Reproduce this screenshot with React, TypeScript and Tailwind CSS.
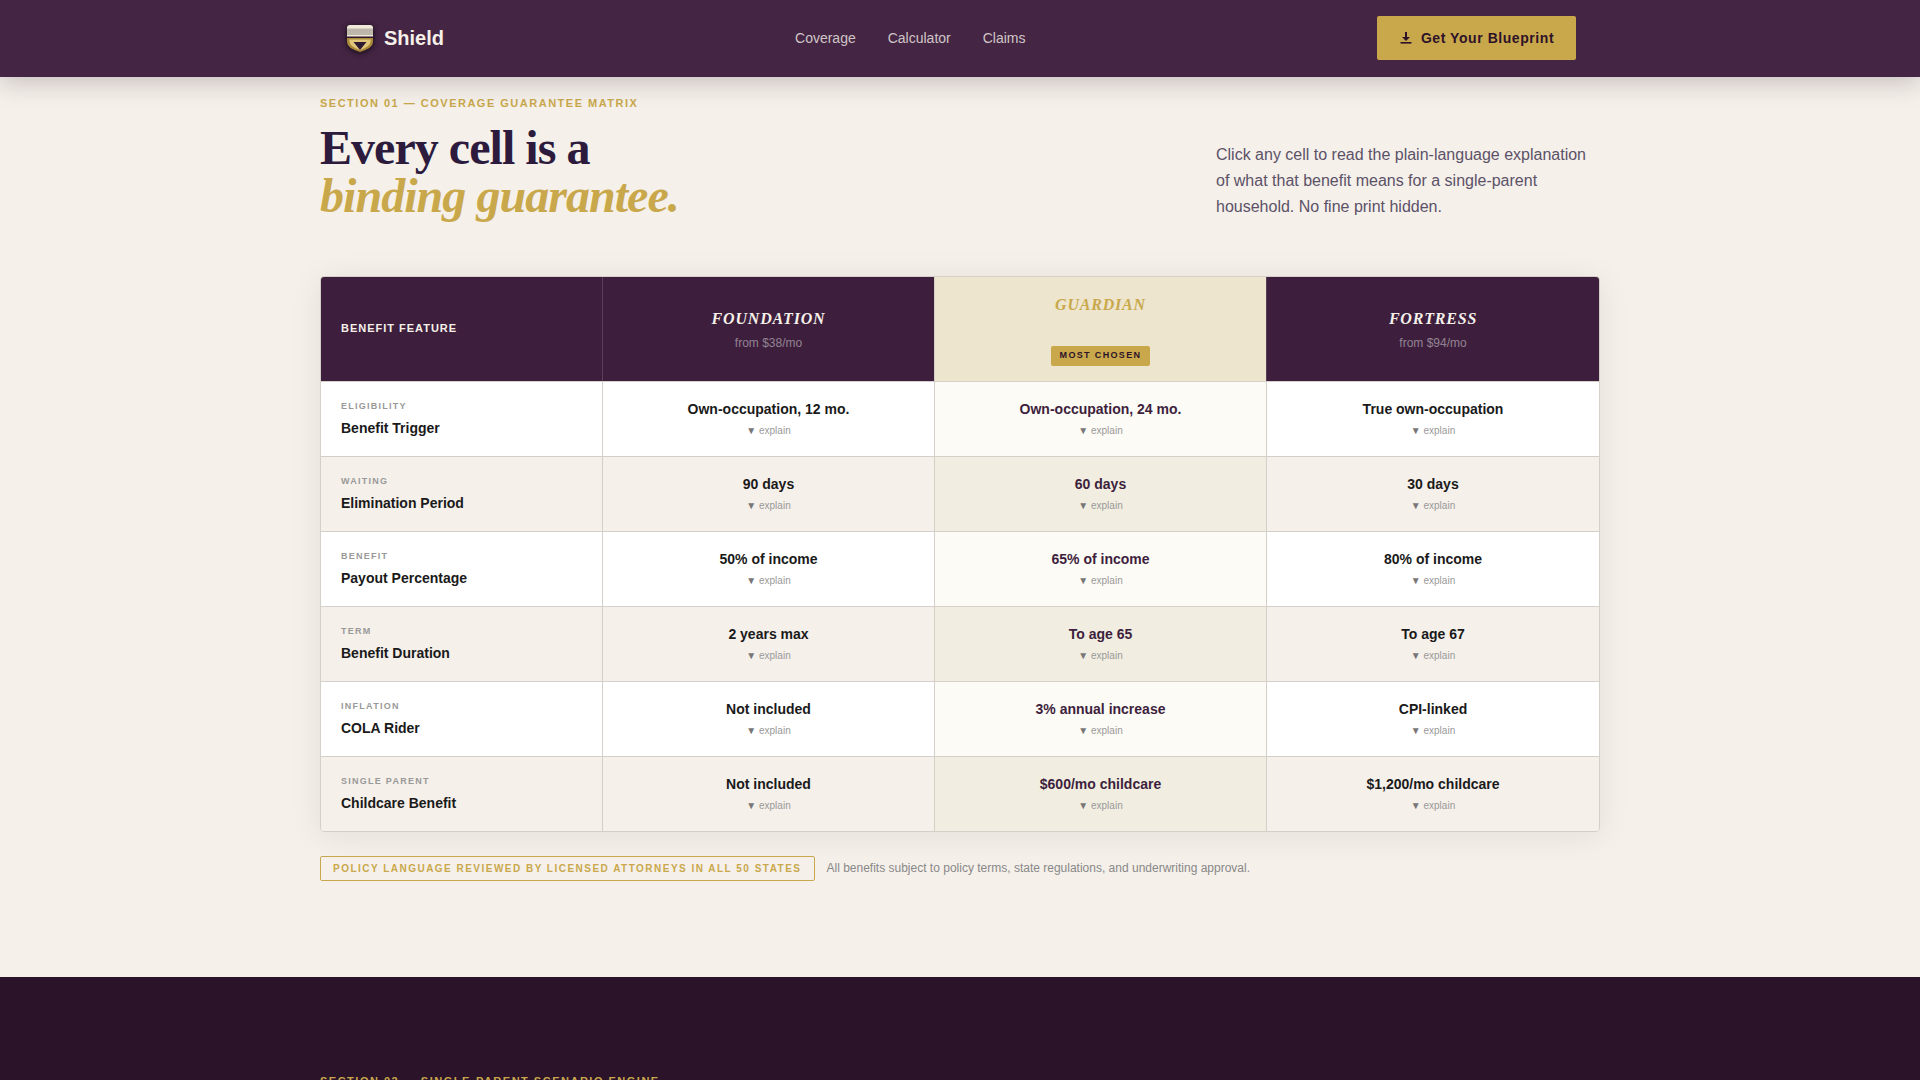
import React from 'react';

const sans = "font-['Liberation_Sans',Arial,sans-serif]";
const serif = "font-['Liberation_Serif','Times_New_Roman',serif]";
const cols = 'grid grid-cols-[281px_332px_332px_333px]';

const rows = [
  { tag: 'ELIGIBILITY', name: 'Benefit Trigger', vals: ['Own-occupation, 12 mo.', 'Own-occupation, 24 mo.', 'True own-occupation'] },
  { tag: 'WAITING', name: 'Elimination Period', vals: ['90 days', '60 days', '30 days'] },
  { tag: 'BENEFIT', name: 'Payout Percentage', vals: ['50% of income', '65% of income', '80% of income'] },
  { tag: 'TERM', name: 'Benefit Duration', vals: ['2 years max', 'To age 65', 'To age 67'] },
  { tag: 'INFLATION', name: 'COLA Rider', vals: ['Not included', '3% annual increase', 'CPI-linked'] },
  { tag: 'SINGLE PARENT', name: 'Childcare Benefit', vals: ['Not included', '$600/mo childcare', '$1,200/mo childcare'] },
];

function Logo() {
  return (
    <svg width="32" height="32" viewBox="0 0 32 32" className="drop-shadow-[0_1px_3px_rgba(0,0,0,0.75)]">
      <path d="M3 6 Q3 3 6 3 H26 Q29 3 29 6 V16 H3 Z" fill="#efe9da" />
      <rect x="3" y="6.5" width="26" height="6.5" fill="#bdb6aa" />
      <rect x="3" y="14.5" width="26" height="1.5" fill="#33192f" />
      <path d="M3 16 H29 V20 Q29 26 16 30 Q3 26 3 20 Z" fill="#a98a3a" />
      <path d="M5.5 17.5 H26.5 V20 Q26 24.5 16 28 Q6 24.5 5.5 20 Z" fill="#e2c77a" />
      <path d="M9.5 20 H22.5 L16 28 Z" fill="#2d1b33" />
    </svg>
  );
}

function PlanHead({ name, price }: { name: string; price: string }) {
  return (
    <div className="bg-[#3d1f3d] border-l border-white/15 flex flex-col items-center justify-center pt-[2px]">
      <div className={`${serif} italic font-bold text-base tracking-[0.05em] text-[#f5f0e8] uppercase leading-[20px]`}>{name}</div>
      <div className="text-xs text-white/45 mt-[5px] leading-[18px]">{price}</div>
    </div>
  );
}

function Cell({ value, guardian, alt }: { value: string; guardian: boolean; alt: boolean }) {
  const bg = guardian ? (alt ? 'bg-[#f1eee1]' : 'bg-[#fdfbf6]') : alt ? 'bg-[#f5f0ea]' : 'bg-white';
  return (
    <div className={`${bg} border-l border-[#d4cfc8] flex flex-col items-center pt-[18px]`}>
      <div className={`text-sm font-bold leading-[18px] ${guardian ? 'text-[#3d1f3d]' : 'text-[#1a1a1a]'}`}>{value}</div>
      <div className="text-[10px] leading-[14px] mt-[6px] text-[#999]"><span className="text-[#777]">▼</span> explain</div>
    </div>
  );
}

export default function App() {
  return (
    <div className={`${sans} h-[1080px] overflow-hidden bg-[#f5f0ea] flex flex-col`}>
      <nav className="relative z-10 h-[77px] bg-[#442544] shadow-[0_4px_24px_rgba(45,27,51,0.25)] shrink-0">
        <div className="w-[1280px] mx-auto h-full flex items-center px-6 pb-[2px]">
          <div className="flex items-center gap-2">
            <Logo />
            <span className="text-xl font-bold text-[#f5f0e8]">Shield</span>
          </div>
          <div className="ml-[351px] flex items-center gap-8 text-sm text-[#f5f0e8]/80">
            <span>Coverage</span>
            <span>Calculator</span>
            <span>Claims</span>
          </div>
          <button className="ml-auto h-11 w-[199px] bg-[#c9a84c] rounded-[2px] flex items-center justify-center gap-[8px] text-sm font-bold tracking-[0.04em] text-[#2d1228]">
            <svg width="14" height="14" viewBox="0 0 14 14" fill="currentColor">
              <path d="M6 1 H8 V6 H11 L7 10 L3 6 H6 Z" />
              <rect x="1.5" y="11" width="11" height="1.6" />
            </svg>
            Get Your Blueprint
          </button>
        </div>
      </nav>

      <main className="w-[1280px] mx-auto shrink-0 pt-[20px] h-[900px]">
        <div className="text-[11px] font-bold tracking-[1.5px] text-[#c9a84c] leading-[13px]">SECTION 01 — COVERAGE GUARANTEE MATRIX</div>
        <div className="flex justify-between mt-[10px] h-[118px]">
          <h1 className={`${serif} font-bold text-5xl leading-[48px] tracking-[-0.02em] text-[#2d1b3d] pt-[4px]`}>
            Every cell is a
            <br />
            <em className="text-[#c9a84c]">binding guarantee.</em>
          </h1>
          <p className="w-[384px] pt-[22px] text-base leading-[26px] text-[#5c5268]">
            Click any cell to read the plain-language explanation of what that benefit means for a single-parent household. No fine print hidden.
          </p>
        </div>

        <div className="mt-[38px] border border-[#d4cfc8] rounded-[4px] overflow-hidden shadow-[0_4px_32px_rgba(45,27,51,0.08)]">
          <div className={`${cols} h-[104px]`}>
            <div className="bg-[#3d1f3d] flex items-center pl-5 pb-[2px] text-[11px] font-bold tracking-[0.09em] text-[#f5f0e8]">BENEFIT FEATURE</div>
            <PlanHead name="Foundation" price="from $38/mo" />
            <div className="bg-[#ede5cd] border-l border-[#d4cfc8] flex flex-col items-center pt-[16px]">
              <div className={`${serif} italic font-bold text-base tracking-[0.05em] text-[#c9a84c] leading-[24px]`}>GUARDIAN</div>
              <span className="mt-[29px] h-5 px-[9px] rounded-[2px] bg-[#c9a84c] text-[9px] font-bold tracking-[0.15em] text-[#2d1228] flex items-center">MOST CHOSEN</span>
            </div>
            <PlanHead name="Fortress" price="from $94/mo" />
          </div>
          {rows.map((r, i) => (
            <div key={r.name} className={`${cols} h-[75px] border-t border-[#d4cfc8]`}>
              <div className={`${i % 2 ? 'bg-[#f5f0ea]' : 'bg-white'} pl-5 pt-[19px]`}>
                <div className="text-[9px] font-bold tracking-[0.14em] text-[#999] leading-[11px]">{r.tag}</div>
                <div className="text-sm font-bold text-[#1a1a1a] leading-[18px] mt-[7px]">{r.name}</div>
              </div>
              {r.vals.map((v, j) => (
                <Cell key={j} value={v} guardian={j === 1} alt={i % 2 === 1} />
              ))}
            </div>
          ))}
        </div>

        <div className="mt-6 flex items-center gap-[11px]">
          <span className="border border-[#c9a84c] rounded-[2px] h-[25px] pl-3 pr-[13px] flex items-center text-[10px] font-bold tracking-[1.48px] text-[#c9a84c]">POLICY LANGUAGE REVIEWED BY LICENSED ATTORNEYS IN ALL 50 STATES</span>
          <span className="text-xs text-[#888] pb-[2px]">All benefits subject to policy terms, state regulations, and underwriting approval.</span>
        </div>
      </main>

      <section className="bg-[#2b1329] flex-1 shrink-0 min-h-[103px]">
        <div className="w-[1280px] mx-auto pt-[98px] text-[11px] font-bold tracking-[1.5px] text-[#c9a84c] leading-[13px]">SECTION 02 — SINGLE-PARENT SCENARIO ENGINE</div>
      </section>
    </div>
  );
}
